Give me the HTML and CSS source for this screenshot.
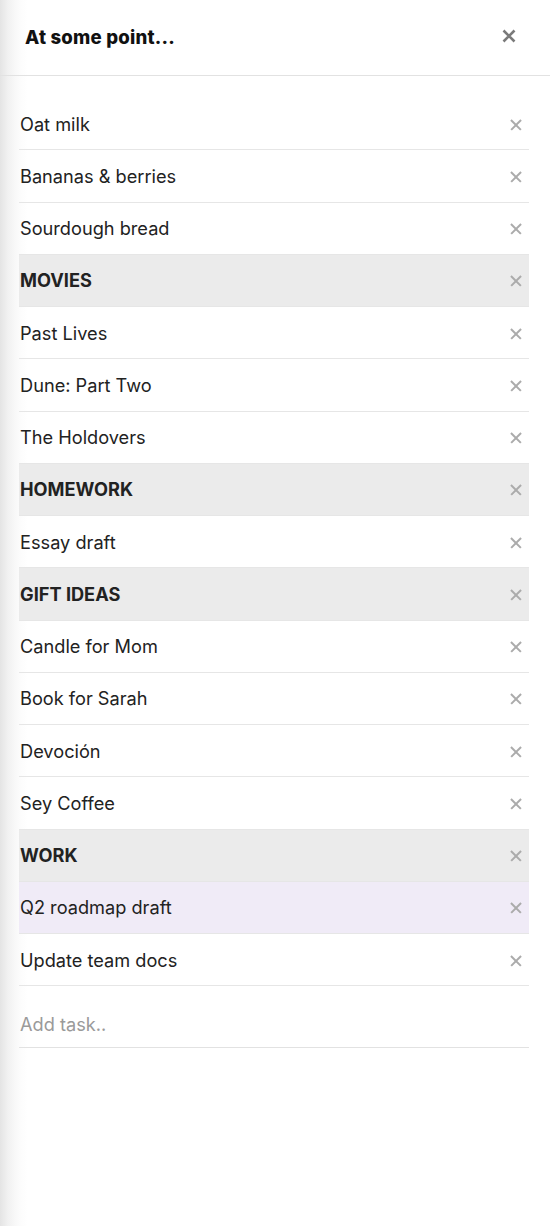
FILE: index.html
```html
<!DOCTYPE html>
<html>
<head>
<meta charset="utf-8">
<link rel="stylesheet" href="styles.css">
</head>
<body>
<div class="panel">
  <header class="head">
    <h1 class="title">At some point...</h1>
    <button class="close" aria-label="Close">
      <svg width="14" height="14" viewBox="0 0 14 14"><path d="M1.5 1.5L12.5 12.5M12.5 1.5L1.5 12.5" stroke="#7a7a7a" stroke-width="2.6" stroke-linecap="butt"/></svg>
    </button>
  </header>
  <ul class="list">
    <li class="row"><span>Oat milk</span><i class="x"></i></li>
    <li class="row"><span>Bananas &amp; berries</span><i class="x"></i></li>
    <li class="row"><span>Sourdough bread</span><i class="x"></i></li>
    <li class="row sect"><span>MOVIES</span><i class="x"></i></li>
    <li class="row"><span>Past Lives</span><i class="x"></i></li>
    <li class="row"><span>Dune: Part Two</span><i class="x"></i></li>
    <li class="row"><span>The Holdovers</span><i class="x"></i></li>
    <li class="row sect"><span>HOMEWORK</span><i class="x"></i></li>
    <li class="row"><span>Essay draft</span><i class="x"></i></li>
    <li class="row sect"><span>GIFT IDEAS</span><i class="x"></i></li>
    <li class="row"><span>Candle for Mom</span><i class="x"></i></li>
    <li class="row"><span>Book for Sarah</span><i class="x"></i></li>
    <li class="row"><span>Devoción</span><i class="x"></i></li>
    <li class="row"><span>Sey Coffee</span><i class="x"></i></li>
    <li class="row sect"><span>WORK</span><i class="x"></i></li>
    <li class="row hl"><span>Q2 roadmap draft</span><i class="x"></i></li>
    <li class="row"><span>Update team docs</span><i class="x"></i></li>
  </ul>
  <div class="add"><input class="add-input" type="text" placeholder="Add task.."></div>
</div>
</body>
</html>
```
FILE: styles.css
```css
* { box-sizing: border-box; }
html, body { margin: 0; padding: 0; }
body {
  width: 550px;
  height: 1226px;
  background: #fff;
  font-family: Inter, "Liberation Sans", sans-serif;
  color: #222;
}
.panel {
  height: 1226px;
  background: linear-gradient(to right, #e4e4e4 0px, #f1f1f1 8px, #f9f9f9 16px, #fdfdfd 22px, #fff 28px);
}
.head {
  height: 76px;
  display: flex;
  align-items: center;
  justify-content: space-between;
  padding: 0 33px 0 25px;
  border-bottom: 1px solid #e2e2e2;
}
.title {
  margin: 0;
  font-size: 18.6px;
  font-weight: 800;
  color: #111;
  letter-spacing: 0.2px;
  padding-bottom: 1px;
}
.close {
  border: 0;
  background: none;
  padding: 0;
  width: 16px;
  height: 16px;
  display: flex;
  align-items: center;
  justify-content: center;
  margin-bottom: 4px;
}
.list {
  list-style: none;
  margin: 22px 0 0 19px;
  padding: 0;
  width: 510px;
}
.row {
  height: 52.25px;
  display: flex;
  align-items: center;
  justify-content: space-between;
  padding: 0 7px 0 1px;
  border-bottom: 1px solid #e6e6e6;
  font-size: 18.2px;
  color: #222;
}
.sect { background: #ebebeb; font-weight: 700; }
.hl { background: #f0ebf7; }
.x {
  width: 12px;
  height: 12px;
  position: relative;
  flex: none;
  margin-top: 2px;
}
.x::before, .x::after {
  content: "";
  position: absolute;
  left: -1px;
  top: 5px;
  width: 14px;
  height: 1.7px;
  background: #ababab;
  transform: rotate(45deg);
}
.x::after { transform: rotate(-45deg); }
.add {
  margin-left: 19px;
  width: 510px;
  height: 62px;
  border-bottom: 1px solid #e2e2e2;
  display: flex;
  align-items: center;
  padding-top: 14px;
}
.add-input {
  border: 0;
  outline: 0;
  background: transparent;
  font-family: inherit;
  font-size: 18.2px;
  padding: 0 0 0 1px;
  width: 100%;
  color: #222;
}
.add-input::placeholder { color: #9a9a9a; }
```
